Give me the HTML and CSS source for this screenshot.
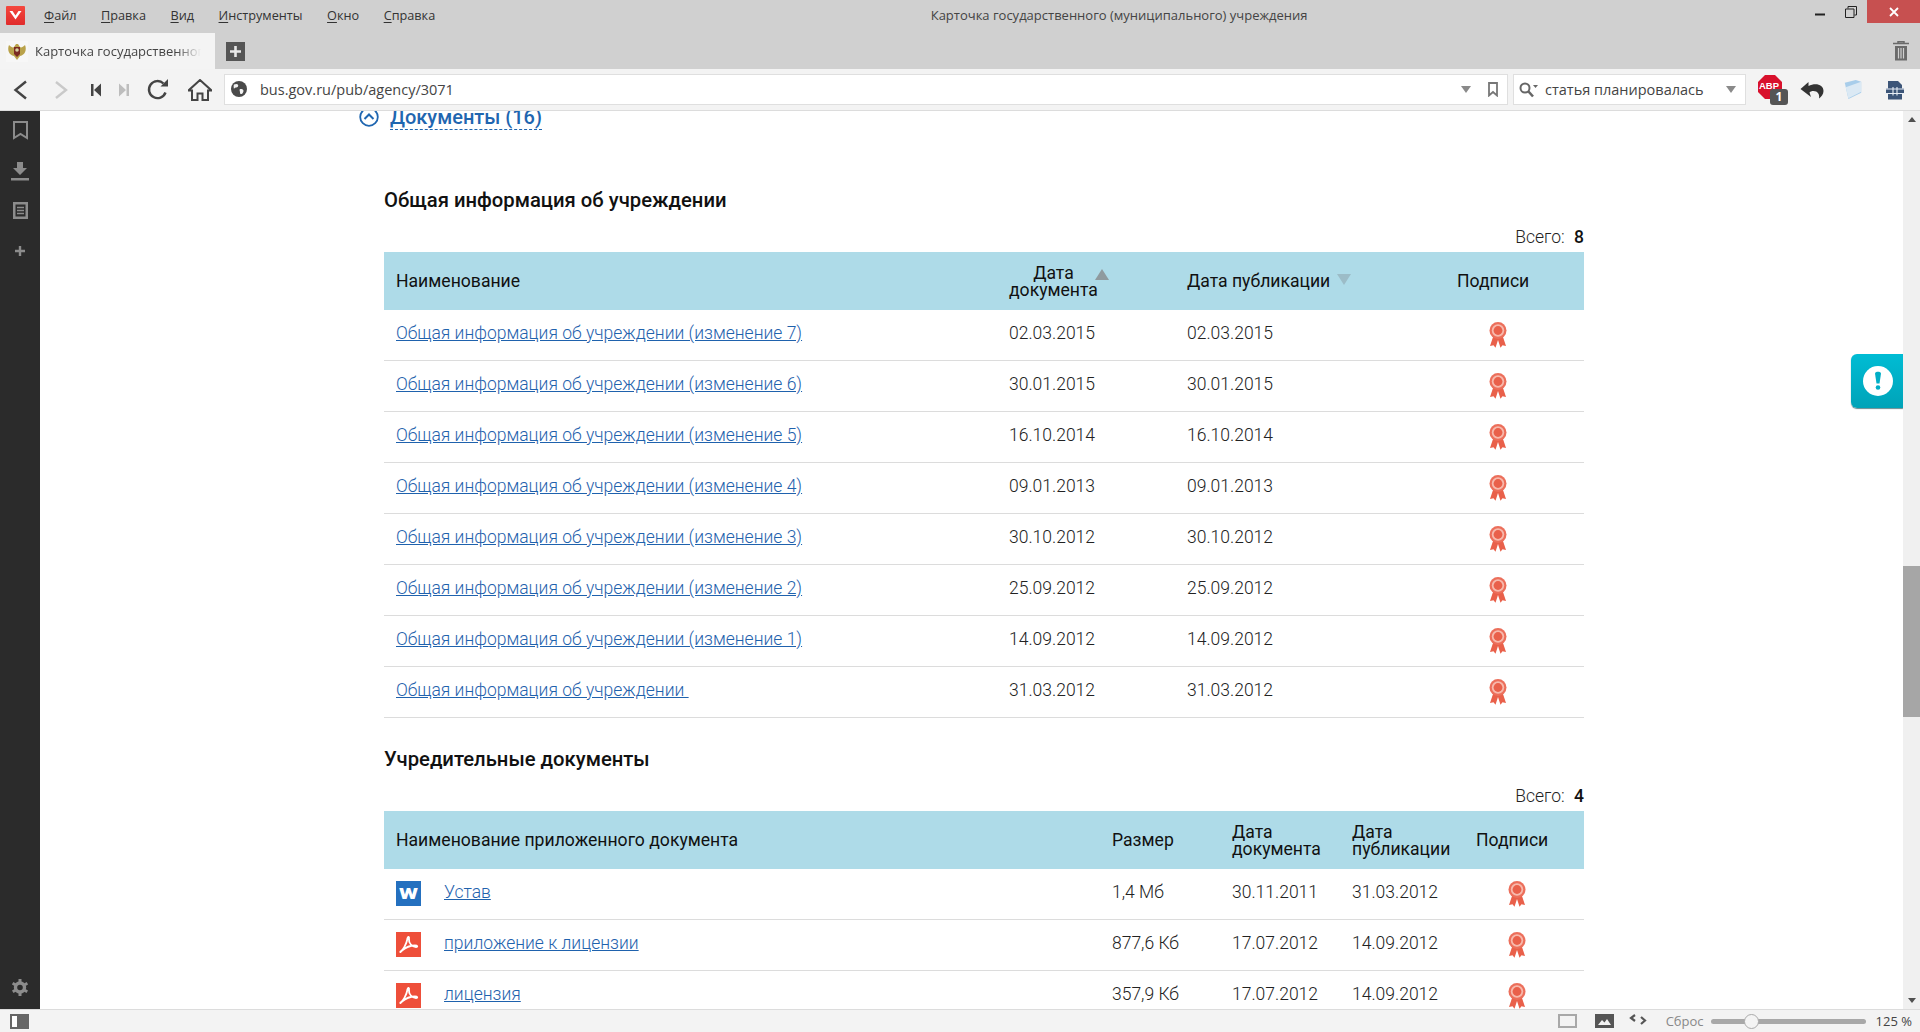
FILE: index.html
```html
<!DOCTYPE html>
<html lang="ru">
<head>
<meta charset="utf-8">
<title>Карточка государственного (муниципального) учреждения</title>
<link rel="stylesheet" href="styles.css">
</head>
<body>
<svg class="defs" width="0" height="0" aria-hidden="true">
  <symbol id="ribbon" viewBox="0 0 18 26">
    <path d="M5 12 L1 24 L4.500 23.200 L6.500 25.800 L9 18 L11.500 25.800 L13.500 23.200 L17 24 L13 12Z" fill="#e9604a"/>
    <circle cx="9" cy="8.500" r="8.500" fill="#ec6f5b"/>
    <circle cx="9" cy="8.500" r="6.200" fill="#f7b9ac"/>
    <circle cx="9" cy="8.500" r="4.400" fill="#e9604a"/>
  </symbol>
  <symbol id="pdf" viewBox="0 0 25 25">
    <rect width="25" height="25" fill="#ee4f3a"/>
    <path d="M4.500 19.500 C7 18.500 10.500 12 11.500 6.500 C11.800 4 13.500 4.500 13 7 C12.500 11 16 15 20 15 C22 15 21.500 13.500 19 13.500 C15 13.500 9.500 15.500 6 18.500 C4.500 20 4 20.500 4.500 19.500Z" fill="none" stroke="#fff" stroke-width="1.800"/>
  </symbol>
</svg>
<div class="app">
  <header class="titlebar">
    <div class="logo"><svg width="19" height="18" viewBox="0 0 19 18"><path d="M3.500 5 L9.500 13.500 L15.500 5 L12.500 5 L9.500 9.500 L6.500 5Z" fill="#fff"/></svg></div>
    <nav class="menu">
      <span><u>Ф</u>айл</span><span><u>П</u>равка</span><span><u>В</u>ид</span><span><u>И</u>нструменты</span><span><u>О</u>кно</span><span><u>С</u>правка</span>
    </nav>
    <div class="wintitle">Карточка государственного (муниципального) учреждения</div>
    <div class="wincontrols">
      <svg class="win-min" width="10" height="3" viewBox="0 0 10 3"><rect width="10" height="2" y="0.500" fill="#222"/></svg>
      <svg class="win-max" width="12" height="12" viewBox="0 0 12 12"><path d="M3 2.500V.500H11.500V9H9.500M.500 3H9V11.500H.500Z" fill="none" stroke="#222"/></svg>
      <div class="win-close"><svg width="10" height="10" viewBox="0 0 10 10"><path d="M1 1L9 9M9 1L1 9" stroke="#fff" stroke-width="1.800"/></svg></div>
    </div>
  </header>

  <div class="tabbar">
    <div class="tab">
      <svg class="favicon" width="22" height="21" viewBox="0 0 22 21">
        <rect width="22" height="21" fill="#f7f7f7"/>
        <path d="M3 4 C1 9 3 14 8 15 L11 19 L14 15 C19 14 21 9 19 4 C17 6 15 7 14 6 L12 3 H10 L8 6 C7 7 5 6 3 4Z" fill="#b9a24a"/>
        <path d="M8 6H14V13L11 16L8 13Z" fill="#7a2a22"/>
        <circle cx="11" cy="9" r="1.800" fill="#d8cfa0"/>
      </svg>
      <span class="tab-text">Карточка государственного (муниципального) учреждения</span>
    </div>
    <div class="newtab"><svg width="13" height="13" viewBox="0 0 13 13"><path d="M6.500 1V12M1 6.500H12" stroke="#e8e8e8" stroke-width="2.600"/></svg></div>
    <svg class="trash" width="16" height="20" viewBox="0 0 16 20"><path d="M0 2.500H16M5 2.500V.700H11V2.500" fill="none" stroke="#6a6a6a" stroke-width="1.500"/><path d="M2 5H14V19.500H2Z" fill="#6a6a6a"/><path d="M5.500 7V17.500M8 7V17.500M10.500 7V17.500" stroke="#d0d0d0" stroke-width="1.200"/></svg>
  </div>

  <div class="toolbar">
    <svg class="i-back" width="16" height="20" viewBox="0 0 16 20"><path d="M14 1.500L3.500 10L14 18.500" fill="none" stroke="#444" stroke-width="2.400"/></svg>
    <svg class="i-fwd" width="14" height="20" viewBox="0 0 14 20"><path d="M2 2L12 10L2 18" fill="none" stroke="#c9c9c9" stroke-width="2.400"/></svg>
    <svg class="i-first" width="12" height="14" viewBox="0 0 12 14"><path d="M1 1H3.500V13H1ZM11 0.500V13.500L4 7Z" fill="#444"/></svg>
    <svg class="i-last" width="12" height="14" viewBox="0 0 12 14"><path d="M11 1H8.500V13H11ZM1 0.500V13.500L8 7Z" fill="#bdbdbd"/></svg>
    <svg class="i-reload" width="22" height="22" viewBox="0 0 22 22"><path d="M18.500 13.500A8.500 8.500 0 1 1 16.500 4.500" fill="none" stroke="#444" stroke-width="2.400"/><path d="M13.500 7.500H21V0Z" fill="#444"/></svg>
    <svg class="i-home" width="24" height="22" viewBox="0 0 24 22"><path d="M12 1L0.500 11.500H4V21H9.500V14.500H14.500V21H20V11.500H23.500Z" fill="none" stroke="#444" stroke-width="2"/></svg>
    <div class="address">
      <svg class="globe" width="16" height="16" viewBox="0 0 16 16"><circle cx="8" cy="8" r="8" fill="#4a4a4a"/><path d="M3 3.500C6 2 8 3.500 7 5.500C6 7 3.500 6 3 8C2.500 6 2.500 4.500 3 3.500ZM9 8C11.500 7.500 13.500 9 12 11.500C11 13.500 9 13.500 9 11.500C9 10 8 9 9 8Z" fill="#f2f2f2"/></svg>
      <span class="url">bus.gov.ru/pub/agency/3071</span>
      <span class="tri"></span>
      <svg class="urlmark" width="10" height="15" viewBox="0 0 10 15"><path d="M1 1H9V13.500L5 10L1 13.500Z" fill="none" stroke="#777" stroke-width="1.800"/></svg>
    </div>
    <div class="search">
      <svg width="19" height="16" viewBox="0 0 19 16"><circle cx="6" cy="6" r="4.500" fill="none" stroke="#666" stroke-width="2"/><path d="M9.500 9.500L14 14.500" stroke="#666" stroke-width="2.600"/><path d="M14 3H19L16.500 6Z" fill="#666"/></svg>
      <span class="query">статья планировалась</span>
      <span class="tri"></span>
    </div>
    <div class="abp">
      <svg width="24" height="24" viewBox="0 0 24 24"><path d="M7 0H17L24 7V17L17 24H7L0 17V7Z" fill="#d8112c"/></svg>
      <span class="abp-text">ABP</span>
      <span class="abp-badge">1</span>
    </div>
    <svg class="i-undo" width="24" height="19" viewBox="0 0 24 19"><path d="M0.500 9L8.500 2V6C15 2.500 23.500 4 23.500 11C23.500 14 21.500 17 19 18.500C20 14.500 17.500 11 13.500 11C11.500 11 10.500 11.500 9.500 12.500L11 17Z" fill="#333"/></svg>
    <svg class="i-folder" width="20" height="21" viewBox="0 0 20 23"><path d="M1 4L13 1L19 3V15L5 22Z" fill="#a8cdea"/><path d="M2 9L19 3V14L5 21Z" fill="#dbe9f4"/></svg>
    <svg class="i-arch" width="20" height="20" viewBox="0 0 20 20"><path d="M3 1H13L17 5V8.500H19V14H17V19.500H3V14H1V8.500H3Z" fill="#3c5578"/><path d="M0.500 9H19.500M0.500 13.500H19.500M8 7V15.500M12 7V15.500" stroke="#e8eef5" stroke-width="1.100"/></svg>
  </div>

  <div class="main">
    <aside class="sidebar">
      <svg width="15" height="19" viewBox="0 0 15 19"><path d="M1 1H14V17L7.500 13L1 17Z" fill="none" stroke="#8c8c8c" stroke-width="2"/></svg>
      <svg class="side-dl" width="18" height="19" viewBox="0 0 18 19"><path d="M6 0H12V6H16L9 13L2 6H6Z" fill="#8c8c8c"/><rect y="16" width="18" height="2.500" fill="#8c8c8c"/></svg>
      <svg class="side-notes" width="15" height="17" viewBox="0 0 15 17"><path d="M0 0H15V17H0Z" fill="#8c8c8c"/><path d="M2.500 2.500H12.500V14.500H2.500Z" fill="#2b2b2b"/><path d="M4 5.500H11M4 8.500H11M4 11.500H11" stroke="#8c8c8c" stroke-width="1.500"/></svg>
      <svg class="side-plus" width="10" height="10" viewBox="0 0 10 10"><path d="M5 0V10M0 5H10" stroke="#8c8c8c" stroke-width="2.400"/></svg>
      <svg class="side-gear" width="16" height="17" viewBox="0 0 16 17"><circle cx="8" cy="8.500" r="4.500" fill="none" stroke="#8c8c8c" stroke-width="3.400"/><path d="M8 0V17M.600 4.200L15.400 12.800M15.400 4.200L.600 12.800" stroke="#8c8c8c" stroke-width="3" stroke-dasharray="3 11"/></svg>
    </aside>

    <div class="page">
      <div class="content">
        <div class="docs-head">
          <svg width="20" height="20" viewBox="0 0 20 20"><circle cx="10" cy="10" r="8.800" fill="none" stroke="#1f66b0" stroke-width="1.800"/><path d="M5.500 12L10 7.500L14.500 12" fill="none" stroke="#1f66b0" stroke-width="2"/></svg>
          <span class="docs-title">Документы (16)</span>
        </div>

        <h2 class="sec-title first">Общая информация об учреждении</h2>
        <div class="total">Всего: <b>8</b></div>
        <table class="grid grid-a">
          <thead>
            <tr>
              <th class="a-name">Наименование</th>
              <th class="a-date"><span class="two-line">Дата<br>документа</span><i class="sort up"></i></th>
              <th class="a-pub">Дата публикации<i class="sort down"></i></th>
              <th class="a-sign">Подписи</th>
            </tr>
          </thead>
          <tbody>
            <tr><td><a href="#">Общая информация об учреждении (изменение 7)</a></td><td>02.03.2015</td><td>02.03.2015</td><td class="sign"><svg class="ribbon"><use href="#ribbon"/></svg></td></tr>
            <tr><td><a href="#">Общая информация об учреждении (изменение 6)</a></td><td>30.01.2015</td><td>30.01.2015</td><td class="sign"><svg class="ribbon"><use href="#ribbon"/></svg></td></tr>
            <tr><td><a href="#">Общая информация об учреждении (изменение 5)</a></td><td>16.10.2014</td><td>16.10.2014</td><td class="sign"><svg class="ribbon"><use href="#ribbon"/></svg></td></tr>
            <tr><td><a href="#">Общая информация об учреждении (изменение 4)</a></td><td>09.01.2013</td><td>09.01.2013</td><td class="sign"><svg class="ribbon"><use href="#ribbon"/></svg></td></tr>
            <tr><td><a href="#">Общая информация об учреждении (изменение 3)</a></td><td>30.10.2012</td><td>30.10.2012</td><td class="sign"><svg class="ribbon"><use href="#ribbon"/></svg></td></tr>
            <tr><td><a href="#">Общая информация об учреждении (изменение 2)</a></td><td>25.09.2012</td><td>25.09.2012</td><td class="sign"><svg class="ribbon"><use href="#ribbon"/></svg></td></tr>
            <tr><td><a href="#">Общая информация об учреждении (изменение 1)</a></td><td>14.09.2012</td><td>14.09.2012</td><td class="sign"><svg class="ribbon"><use href="#ribbon"/></svg></td></tr>
            <tr><td><a href="#">Общая информация об учреждении&nbsp;</a></td><td>31.03.2012</td><td>31.03.2012</td><td class="sign"><svg class="ribbon"><use href="#ribbon"/></svg></td></tr>
          </tbody>
        </table>

        <h2 class="sec-title">Учредительные документы</h2>
        <div class="total">Всего: <b>4</b></div>
        <table class="grid grid-b">
          <thead>
            <tr>
              <th class="b-name">Наименование приложенного документа</th>
              <th class="b-size">Размер</th>
              <th class="b-date"><span class="two-line left">Дата<br>документа</span></th>
              <th class="b-pub"><span class="two-line left">Дата<br>публикации</span></th>
              <th class="b-sign">Подписи</th>
            </tr>
          </thead>
          <tbody>
            <tr><td><div class="file"><svg class="word" viewBox="0 0 25 25"><rect width="25" height="25" fill="#2470bf"/><text x="12.500" y="17.500" text-anchor="middle" textLength="19" lengthAdjust="spacingAndGlyphs" class="word-letter">W</text></svg><a href="#">Устав</a></div></td><td>1,4 Мб</td><td>30.11.2011</td><td>31.03.2012</td><td class="sign"><svg class="ribbon"><use href="#ribbon"/></svg></td></tr>
            <tr><td><div class="file"><svg class="pdf"><use href="#pdf"/></svg><a href="#">приложение к лицензии</a></div></td><td>877,6 Кб</td><td>17.07.2012</td><td>14.09.2012</td><td class="sign"><svg class="ribbon"><use href="#ribbon"/></svg></td></tr>
            <tr><td><div class="file"><svg class="pdf"><use href="#pdf"/></svg><a href="#">лицензия</a></div></td><td>357,9 Кб</td><td>17.07.2012</td><td>14.09.2012</td><td class="sign"><svg class="ribbon"><use href="#ribbon"/></svg></td></tr>
          </tbody>
        </table>
      </div>
      <div class="feedback"><svg width="30" height="30" viewBox="0 0 30 30"><circle cx="15" cy="15" r="15" fill="#fff"/><path d="M12 7.500C12 5 18 5 18 7.500L16.500 17.500H13.500Z" fill="#00aec6"/><circle cx="15" cy="21.500" r="2.300" fill="#00aec6"/></svg></div>
    </div>

    <div class="scrollbar">
      <span class="arrow up"></span>
      <div class="track"><div class="thumb"></div></div>
      <span class="arrow down"></span>
    </div>
  </div>

  <footer class="statusbar">
    <svg class="st-panel" width="19" height="15" viewBox="0 0 19 15"><rect width="19" height="15" fill="#666"/><rect x="2" y="2" width="5" height="11" fill="#fff"/></svg>
    <svg class="st-rect" width="19" height="14" viewBox="0 0 19 14"><rect x="1" y="1" width="17" height="12" fill="none" stroke="#a8a8a8" stroke-width="2"/></svg>
    <svg class="st-img" width="19" height="14" viewBox="0 0 19 14"><rect width="19" height="14" fill="#555"/><path d="M3 11L7 6L9.500 8.500L12 5L16 11Z" fill="#f3f3f3"/></svg>
    <svg class="st-code" width="18" height="11" viewBox="0 0 18 11"><path d="M6 1L2 4L6 7M12 3L16 6.500L12 10" fill="none" stroke="#555" stroke-width="2.200"/></svg>
    <span class="st-reset">Сброс</span>
    <div class="slider"><div class="knob"></div></div>
    <span class="st-zoom">125 %</span>
  </footer>
</div>
</body>
</html>
```
FILE: styles.css
```css
* { box-sizing: border-box; }
html, body { margin: 0; height: 100%; overflow: hidden; }
body { font-family: "Roboto", "Liberation Sans", sans-serif; color: #222; background: #fff; }
.defs { position: absolute; }
svg { display: block; flex: none; }

.app { display: flex; flex-direction: column; height: 1032px; }

/* title bar */
.titlebar { display: flex; align-items: flex-start; height: 33px; background: #d0d0d0; font-family: "Open Sans", sans-serif; font-size: 12.700px; color: #333; }
.logo { width: 19px; height: 19px; margin: 6px 0 0 6px; background: linear-gradient(#f4483e, #e02b2b); border-radius: 1px; }
.menu { display: flex; gap: 24.500px; margin: 6px 0 0 19px; line-height: 18px; }
.menu u { text-decoration-thickness: 1px; text-underline-offset: 2px; }
.wintitle { flex: 1; text-align: center; font-size: 13px; line-height: 18px; margin-top: 6px; padding-right: 12px; color: #444; }
.wincontrols { display: flex; align-items: flex-start; width: 105px; }
.win-min { margin: 13px 0 0 0; }
.win-max { margin: 6px 0 0 20px; }
.win-close { display: flex; align-items: center; justify-content: center; width: 53px; height: 23px; margin-left: 10px; background: #c75050; }

/* tabs */
.tabbar { display: flex; align-items: center; height: 36px; background: #d0d0d0; font-family: "Open Sans", sans-serif; }
.tab { display: flex; align-items: center; width: 215px; height: 36px; padding-left: 6px; background: #f4f4f4; font-size: 13px; color: #444; }
.favicon { margin-right: 7px; }
.tab-text { flex: 1; overflow: hidden; white-space: nowrap; margin-right: 14px; -webkit-mask-image: linear-gradient(to right, #000 85%, transparent); mask-image: linear-gradient(to right, #000 85%, transparent); }
.newtab { display: flex; align-items: center; justify-content: center; width: 19px; height: 19px; margin-left: 11px; background: #555; }
.trash { margin-left: auto; margin-right: 11px; }

/* toolbar */
.toolbar { display: flex; align-items: center; height: 42px; padding-right: 15px; background: #f3f3f3; border-bottom: 1px solid #dcdcdc; font-family: "Open Sans", sans-serif; }
.i-back { margin-left: 12px; }
.i-fwd { margin-left: 26px; }
.i-first { margin-left: 22px; }
.i-last { margin-left: 16px; }
.i-reload { margin-left: 17px; }
.i-home { margin-left: 19px; }
.address { display: flex; align-items: center; flex: 1; height: 31px; margin-left: 12px; background: #fff; border: 1px solid #dfdfdf; font-size: 14.500px; color: #444; }
.globe { margin-left: 6px; margin-bottom: 1px; }
.url { margin-left: 13px; flex: 1; }
.tri { width: 0; height: 0; border: 5px solid transparent; border-top: 7px solid #8a8a8a; border-bottom: 0; }
.urlmark { margin: 0 9px 0 17px; }
.search { display: flex; align-items: center; width: 233px; height: 31px; margin-left: 5px; padding-left: 5px; background: #fff; border: 1px solid #dfdfdf; font-size: 14.500px; color: #444; }
.query { margin-left: 7px; flex: 1; white-space: nowrap; }
.search .tri { margin-right: 9px; }
.abp { position: relative; width: 30px; height: 30px; margin-left: 12px; }
.abp svg { position: absolute; top: 0; left: 0; }
.abp-text { position: absolute; top: 4px; left: 1px; font: 700 9.500px/14px "Liberation Sans", sans-serif; color: #fff; }
.abp-badge { position: absolute; right: 0; bottom: 0; width: 18px; height: 16px; border-radius: 3px; background: #555; color: #fff; font: 700 12px/16px "Open Sans", sans-serif; text-align: center; }
.i-undo { margin-left: 12px; }
.i-folder { margin-left: 19px; }
.i-arch { margin-left: 22px; }

/* main area */
.main { display: flex; flex: 1; min-height: 0; }
.sidebar { display: flex; flex-direction: column; align-items: center; width: 40px; padding-top: 10px; background: #2b2b2b; }
.side-dl { margin-top: 22px; }
.side-notes { margin-top: 21px; }
.side-plus { margin-top: 27px; }
.side-gear { margin-top: auto; margin-bottom: 13px; }

.page { position: relative; flex: 1; overflow: hidden; background: #fff; }
.content { width: 1200px; margin-left: 344px; }
.docs-head { display: flex; align-items: center; gap: 11px; height: 24px; margin: -6px 0 0 -25px; color: #1f66b0; }
.docs-title { font-size: 20px; font-weight: 500; line-height: 24px; border-bottom: 1px dashed #1f66b0; }
.sec-title { margin: 29px 0 0; font-size: 20.250px; line-height: 24px; font-weight: 500; color: #111; }
.sec-title.first { margin-top: 59px; }
.total { height: 40px; padding-top: 15px; text-align: right; font-size: 17.500px; font-weight: 300; line-height: 20px; color: #222; }
.total b { margin-left: 5px; font-weight: 500; color: #111; }

.grid { width: 1200px; table-layout: fixed; border-collapse: separate; border-spacing: 0; font-size: 17.500px; }
.grid th { height: 58px; padding: 0 12px; background: #aedbe8; font-size: 17.600px; font-weight: 400; text-align: left; color: #111; line-height: 17px; position: relative; }
.grid th.a-pub { padding-top: 2px; }
.grid td { height: 51px; padding: 11px 12px 0; vertical-align: top; border-bottom: 1px solid #dcdcdc; font-weight: 300; line-height: 24px; color: #222; }
.grid a { color: #1f62ad; }
.a-name { width: 613px; }
.a-date { width: 178px; }
.a-pub { width: 270px; }
.a-sign { width: 139px; }
.b-name { width: 716px; }
.b-size { width: 120px; }
.b-date { width: 120px; }
.b-pub { width: 124px; }
.b-sign { width: 120px; }
.two-line { display: inline-block; margin-top: 2px; text-align: center; vertical-align: middle; }
.two-line.left { text-align: left; }
.sort { display: inline-block; width: 0; height: 0; border: 7px solid transparent; border-top: 0; border-bottom: 0; }
.a-date .sort.up { border-bottom: 11px solid #8f9a9e; margin: 0 0 14px -3px; vertical-align: middle; }
.a-pub .sort.down { border-top: 11px solid #9cbcc7; margin: 0 0 6px 7px; vertical-align: middle; }
.grid td.sign { padding: 12px 0 0 44px; }
.ribbon { width: 18px; height: 26px; }
.file { display: flex; align-items: flex-start; gap: 23px; }
.word { width: 25px; height: 25px; margin-top: 1px; }
.word-letter { font: 900 15px "Roboto", sans-serif; fill: #fff; }
.pdf { width: 25px; height: 25px; margin-top: 1px; }

.feedback { position: absolute; top: 243px; right: 0; display: flex; align-items: center; justify-content: center; width: 52px; height: 54px; padding-left: 2px; background: linear-gradient(#00bcd4, #00a3b8); border-radius: 6px 0 0 6px; box-shadow: 0 1px 1px rgba(0,60,70,.6); }

/* scrollbar */
.scrollbar { display: flex; flex-direction: column; align-items: center; width: 17px; background: #f0f0f0; }
.arrow { flex: none; width: 0; height: 0; margin: 6px 0; border: 4px solid transparent; }
.arrow.up { border-top: 0; border-bottom: 5px solid #505050; }
.arrow.down { border-bottom: 0; border-top: 5px solid #505050; }
.track { flex: 1; width: 100%; padding-top: 438px; }
.thumb { height: 151px; background: #a6a6a6; }

/* status bar */
.statusbar { display: flex; align-items: center; height: 23px; background: #f3f3f3; border-top: 1px solid #dcdcdc; font-family: "Open Sans", sans-serif; font-size: 13px; color: #444; }
.st-panel { margin-left: 10px; }
.st-rect { margin-left: auto; }
.st-img { margin-left: 18px; }
.st-code { margin-left: 15px; margin-bottom: 3px; }
.st-reset { margin-left: 19px; color: #888; }
.slider { position: relative; width: 155px; height: 5px; margin-left: 7px; border-radius: 3px; background: #a8a8a8; }
.knob { position: absolute; top: -5px; left: 33px; width: 15px; height: 15px; border-radius: 50%; background: #f4f4f4; border: 1px solid #aaa; }
.st-zoom { margin: 0 8px 0 10px; white-space: nowrap; }
```
